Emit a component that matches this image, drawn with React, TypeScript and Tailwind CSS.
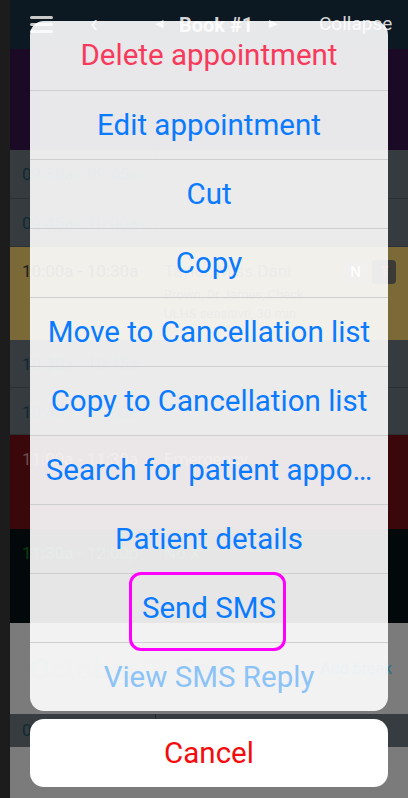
const actions = [
  { label: 'Delete appointment', color: 'text-[#f73a5c]' },
  { label: 'Edit appointment', color: 'text-[#0a7aff]' },
  { label: 'Cut', color: 'text-[#0a7aff]' },
  { label: 'Copy', color: 'text-[#0a7aff]' },
  { label: 'Move to Cancellation list', color: 'text-[#0a7aff]' },
  { label: 'Copy to Cancellation list', color: 'text-[#0a7aff]' },
  { label: 'Search for patient appo…', color: 'text-[#0a7aff]' },
  { label: 'Patient details', color: 'text-[#0a7aff]' },
  { label: 'Send SMS', color: 'text-[#0a7aff]' },
  { label: 'View SMS Reply', color: 'text-[#8cc3f7]' },
];

function Slot({ time, h, bg, text, children }: { time: string; h: string; bg: string; text: string; children?: React.ReactNode }) {
  return (
    <div className={`flex ${h} ${bg} border-b border-[#2b3034]`}>
      <div className={`w-[146px] shrink-0 pl-3 pt-3 text-[17px] ${text} border-r border-[#2b3034]`}>{time}</div>
      <div className="flex-1 pl-2 pt-3">{children}</div>
    </div>
  );
}

export default function App() {
  return (
    <div className="relative w-[408px] h-[798px] overflow-hidden flex" style={{ fontFamily: 'Roboto, "Noto Sans", sans-serif' }}>
      {/* left edge strip */}
      <div className="w-[10px] shrink-0 bg-[#1c1c1c]" />

      {/* calendar app behind the sheet */}
      <div className="flex-1 flex flex-col">
        <div className="h-[49px] bg-[#0c1822] flex items-center pl-5 text-[#d2d4d6] whitespace-nowrap">
          <div className="flex flex-col gap-[4px] w-[23px]">
            <div className="w-[23px] h-[3px] rounded bg-[#c9c9c9]" />
            <div className="w-[23px] h-[3px] rounded bg-[#c9c9c9]" />
            <div className="w-[23px] h-[3px] rounded bg-[#c9c9c9]" />
          </div>
          <span className="text-[26px] leading-none ml-[37px] w-[12px] -mt-1">‹</span>
          <span className="text-[11px] ml-[53px] w-[12px]">◀</span>
          <span className="text-[20px] font-bold ml-[12px] w-[76px]">Book #1</span>
          <span className="text-[11px] ml-[14px] w-[12px]">▶</span>
          <span className="text-[19px] ml-[38px]">Collapse</span>
        </div>
        <div className="h-[101px] bg-[#1a0a26]" />
        <Slot time="09:30a - 09:45a" h="h-[49px]" bg="bg-[#353b3f]" text="text-[#0f2a33]" />
        <Slot time="09:45a - 10:00a" h="h-[48px]" bg="bg-[#353b3f]" text="text-[#0f2a33]" />
        <div className="flex h-[93px] bg-[#7b6a38]">
          <div className="w-[146px] shrink-0 pl-3 pt-3 text-[17px] text-[#1b1b1b]">10:00a - 10:30a</div>
          <div className="flex-1 pl-2 pt-3 text-[#3a3320]">
            <div className="flex items-center">
              <span className="text-[17px]">Taylor, Miss Dani</span>
              <span className="ml-auto w-[25px] h-[24px] rounded bg-[#6f6a5a] text-white text-[15px] flex items-center justify-center">N</span>
              <span className="ml-1 mr-3 w-[24px] h-[24px] rounded bg-[#3b3a36] text-[#c33] text-[15px] flex items-center justify-center">T</span>
            </div>
            <div className="text-[13px]">Brown, Dr James, Check</div>
            <div className="text-[13px]">ULHS sensitive, 30 min</div>
          </div>
        </div>
        <Slot time="10:30a - 10:45a" h="h-[48px]" bg="bg-[#353b3f]" text="text-[#0f2a33]" />
        <Slot time="10:45a - 11:00a" h="h-[47px]" bg="bg-[#353b3f]" text="text-[#0f2a33]" />
        <div className="flex h-[94px] bg-[#3a070b] text-[#6a5050] text-[17px]">
          <div className="w-[146px] shrink-0 pl-3 pt-3">11:00a - 11:30a</div>
          <div className="pl-2 pt-3">Emergency</div>
        </div>
        <div className="flex h-[94px] bg-[#03080b] text-[#0b3d12] text-[17px]">
          <div className="w-[146px] shrink-0 pl-3 pt-3">11:30a - 12:00p</div>
          <div className="pl-2 pt-3">No X</div>
        </div>
        <div className="h-[91px] bg-[#7b7b7b] flex items-center pl-5 pr-4">
          <span className="text-[30px] font-bold text-[#6d6f71]">October 1, Sat.</span>
          <span className="ml-auto text-[16px] text-[#2b6f86]">Add break</span>
        </div>
        <div className="flex h-[33px] bg-[#363c40]">
          <div className="w-[146px] shrink-0 pl-3 pt-1 text-[17px] text-[#0f2a33] border-r border-[#1c2a30]">08:00a</div>
        </div>
        <div className="flex-1 bg-[#7b7b7b]" />
      </div>

      {/* action sheet */}
      <div className="absolute left-[30px] top-[21px] w-[358px] flex flex-col gap-[8px]">
        <div className="rounded-[14px] overflow-hidden bg-white/90 flex flex-col">
          {actions.map((a, i) => (
            <div
              key={a.label}
              className={`h-[69px] flex items-center justify-center whitespace-nowrap text-[29.5px] ${a.color} ${i > 0 ? 'border-t border-[#cfcfd1]' : ''}`}
            >
              {a.label}
            </div>
          ))}
        </div>
        <div className="h-[68px] rounded-[14px] bg-white flex items-center justify-center text-[29.5px] text-[#f40b0b]">
          Cancel
        </div>
      </div>

      {/* highlight annotation */}
      <div className="absolute left-[129px] top-[572px] w-[157px] h-[79px] border-[3px] border-[#ff00ff] rounded-[12px]" />
    </div>
  );
}
